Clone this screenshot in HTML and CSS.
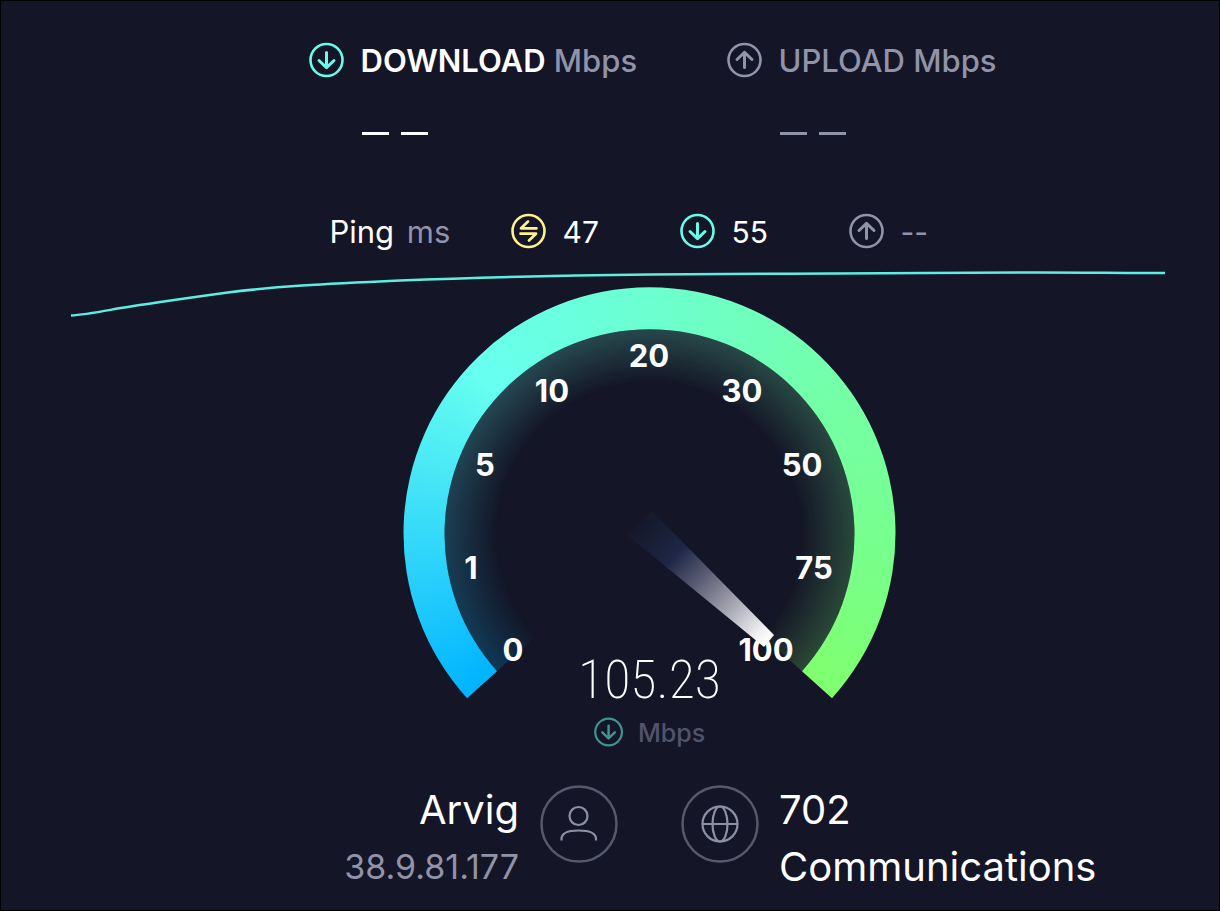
FILE: index.html
```html
<!DOCTYPE html>
<html lang="en">
<head>
<meta charset="utf-8">
<meta name="viewport" content="width=device-width, initial-scale=1">
<title>Speed test</title>
<link rel="stylesheet" href="styles.css">
</head>
<body>
<svg class="symbols" aria-hidden="true">
  <symbol id="icon-down" viewBox="0 0 36 36">
    <circle cx="17.500" cy="18" r="16" stroke-width="2.6"/>
    <path d="M17.500 10.500V25M10 18.500L17.500 25.700L25 18.500" stroke-width="3"/>
  </symbol>
  <symbol id="icon-up" viewBox="0 0 36 36">
    <circle cx="17.500" cy="18" r="16" stroke-width="2.6"/>
    <path d="M17.500 25.500V11M10 17.500L17.500 10.300L25 17.500" stroke-width="3"/>
  </symbol>
  <symbol id="icon-idle" viewBox="0 0 36 36">
    <circle cx="17.500" cy="18" r="16" stroke-width="2.6"/>
    <path d="M25.500 15.300H10L17 8.500M9.500 20.700H25L18 27.500" stroke-width="2.700"/>
  </symbol>
</svg>
<main class="panel">
  <section class="results">
    <div class="result">
      <svg class="icon teal"><use href="#icon-down"/></svg>
      <h2 class="result-title"><span class="strong">DOWNLOAD</span> Mbps</h2>
      <div class="pending white"><i></i><i></i></div>
    </div>
    <div class="result">
      <svg class="icon grey"><use href="#icon-up"/></svg>
      <h2 class="result-title">UPLOAD Mbps</h2>
      <div class="pending"><i></i><i></i></div>
    </div>
  </section>

  <section class="ping">
    <div class="ping-title">Ping <span class="unit">ms</span></div>
    <div class="ping-item"><svg class="icon yellow"><use href="#icon-idle"/></svg><span>47</span></div>
    <div class="ping-item"><svg class="icon teal"><use href="#icon-down"/></svg><span>55</span></div>
    <div class="ping-item unit"><svg class="icon grey"><use href="#icon-up"/></svg><span>--</span></div>
  </section>

  <section class="stage">
    <svg class="chart" viewBox="0 0 1094 46" preserveAspectRatio="none" aria-hidden="true">
      <path d="M0 44.500C12 44 22 42 48 37.300C80 32 120 26.500 155 21.700C205 15.500 250 13 329 9.500C400 6.500 480 4.500 579 3.500C700 2.700 860 1.800 950 1.500C1020 1.200 1050 2.500 1094 2"/>
    </svg>
    <div class="gauge">
      <svg class="dial" viewBox="0 0 493 412" role="img" aria-label="Speed gauge">
        <defs>
          <clipPath id="arc"><path d="M64 411.200A246 246 0 1 1 429 411.200L399 384.200A205 205 0 1 0 94 384.200Z"/></clipPath>
          <clipPath id="inner"><path d="M94 384.200A205 205 0 1 1 399 384.200L246.500 247Z"/></clipPath>
          <linearGradient id="beam" gradientUnits="userSpaceOnUse" x1="236" y1="235" x2="366" y2="355">
            <stop offset="0" stop-color="#172038" stop-opacity=".3"/>
            <stop offset=".28" stop-color="#1e2746"/>
            <stop offset=".48" stop-color="#5c5d74"/>
            <stop offset=".7" stop-color="#a3a3b0"/>
            <stop offset=".92" stop-color="#f0f0f2"/>
            <stop offset="1" stop-color="#fff"/>
          </linearGradient>
        </defs>
        <g clip-path="url(#inner)"><foreignObject width="493" height="493"><div class="sweep glow"></div></foreignObject></g>
        <g clip-path="url(#arc)"><foreignObject width="493" height="493"><div class="sweep"></div></foreignObject></g>
        <g class="marks">
          <text x="110" y="374">0</text>
          <text x="68" y="292">1</text>
          <text x="82" y="189">5</text>
          <text x="149" y="115">10</text>
          <text x="246" y="80">20</text>
          <text x="339" y="115">30</text>
          <text x="399" y="189">50</text>
          <text x="411" y="292">75</text>
          <text x="363" y="374">100</text>
        </g>
        <path d="M223 247L249 224L371 348L361 360Z" fill="url(#beam)"/>
      </svg>
      <div class="reading">
        <div class="speed">105.23</div>
        <div class="speed-unit"><svg class="icon small"><use href="#icon-down"/></svg>Mbps</div>
      </div>
    </div>
  </section>

  <section class="hosts">
    <div class="client">
      <div>Arvig</div>
      <div class="address">38.9.81.177</div>
    </div>
    <svg class="badge" viewBox="0 0 78 78" aria-hidden="true">
      <circle class="ring" cx="39" cy="39" r="37.500"/>
      <circle cx="38.500" cy="31" r="9"/>
      <path d="M21.500 55.500V54C21.500 48 29 45.500 38.500 45.500S56 48 56 54V55.500"/>
    </svg>
    <svg class="badge" viewBox="0 0 78 78" aria-hidden="true">
      <circle class="ring" cx="39" cy="39" r="37.500"/>
      <circle cx="39" cy="39" r="17.500"/>
      <ellipse cx="39" cy="39" rx="7.500" ry="17.500"/>
      <path d="M21.500 39H56.500"/>
    </svg>
    <div class="server">702 Communications</div>
  </section>
</main>
</body>
</html>
```
FILE: styles.css
```css
* { box-sizing: border-box; }

body {
  margin: 0;
  background: #141526;
  color: #fff;
  font-family: Inter, "Open Sans", sans-serif;
  font-size: 30px;
  line-height: 36px;
}

.symbols { position: absolute; width: 0; height: 0; }

.panel {
  min-height: 100vh;
  padding-top: 41px;
  border: 1px solid #000;
}

.results,
.ping,
.hosts { padding-left: 79px; }

.icon {
  width: 36px;
  height: 36px;
  flex: none;
  fill: none;
  stroke: currentColor;
  stroke-linecap: round;
  stroke-linejoin: round;
}

.teal { color: #67fdeb; }
.yellow { color: #fff18c; }
.grey,
.unit { color: #9193a8; }

.results {
  display: grid;
  grid-template-columns: 418px 264px;
  justify-content: center;
}

.result {
  display: grid;
  grid-template-columns: 36px auto;
  column-gap: 16px;
  justify-content: start;
  color: #9193a8;
}

.result-title {
  margin: 0;
  padding-top: 1px;
  font-size: 31px;
  font-weight: 500;
  white-space: nowrap;
}

.strong {
  color: #fff;
  font-weight: 600;
}

.pending {
  grid-column: 2;
  display: flex;
  gap: 12px;
  padding: 53px 0 0 1px;
}

.pending i {
  width: 27px;
  height: 3px;
  background: currentColor;
}

.white { color: #fff; }

.ping {
  display: grid;
  grid-template-columns: 181px 169px 169px 121px;
  justify-content: center;
  padding-top: 78px;
}

.ping-title {
  padding-top: 1px;
  font-size: 31px;
}

.ping-title .unit { margin-left: 4px; }

.ping-item {
  display: flex;
  gap: 16px;
}

.ping-item span { padding-top: 1px; }

.stage {
  display: grid;
  padding-top: 21px;
}

.chart {
  grid-area: 1 / 1;
  width: calc(100% - 124px);
  height: 46px;
  margin-left: 70px;
  fill: none;
  stroke: #5eeee0;
}

.chart path {
  stroke-width: 2.5px;
  vector-effect: non-scaling-stroke;
}

.gauge {
  grid-area: 1 / 1;
  display: grid;
  justify-content: center;
  padding: 16px 0 0 79px;
}

.dial {
  grid-area: 1 / 1;
  width: 493px;
  height: 412px;
}

.sweep {
  width: 493px;
  height: 494px;
  background: conic-gradient(from 225deg, #00b2ff 0deg, #04b6ff 6deg, #36daf9 45deg, #67fff0 88deg, #6cffd0 135deg, #74ffa8 188deg, #78ff8c 230deg, #80ff6c 270deg);
}

.glow {
  opacity: 0.22;
  mask-image: radial-gradient(circle, transparent 150px, #000 205px);
}

.marks {
  fill: #fff;
  font-size: 31px;
  font-weight: 700;
  text-anchor: middle;
}

.reading {
  grid-area: 1 / 1;
  padding-top: 356px;
  text-align: center;
}

.speed {
  font-family: "Roboto Condensed", "Liberation Sans Narrow", Roboto, sans-serif;
  font-size: 54px;
  font-weight: 200;
  line-height: 74px;
}

.speed-unit {
  display: flex;
  justify-content: center;
  gap: 14px;
  color: #51536a;
  font-size: 25px;
  font-weight: 500;
  line-height: 32px;
}

.small {
  width: 30px;
  height: 30px;
  color: #3f9391;
}

.hosts {
  display: grid;
  grid-template-columns: 1fr 78px 78px 1fr;
  column-gap: 63px;
  align-items: start;
  padding-top: 36px;
  font-size: 40px;
  line-height: 57px;
}

.client,
.server {
  margin-top: -4px;
}

.client {
  margin-right: -42px;
  text-align: right;
}

.address {
  color: #9193a8;
  font-size: 34px;
}

.badge {
  width: 78px;
  height: 78px;
  fill: none;
  stroke: #8e90a5;
  stroke-width: 2.2px;
}

.ring {
  stroke: #56586c;
  stroke-width: 2.5px;
}

.server {
  max-width: 340px;
  margin-left: -43px;
}
```
